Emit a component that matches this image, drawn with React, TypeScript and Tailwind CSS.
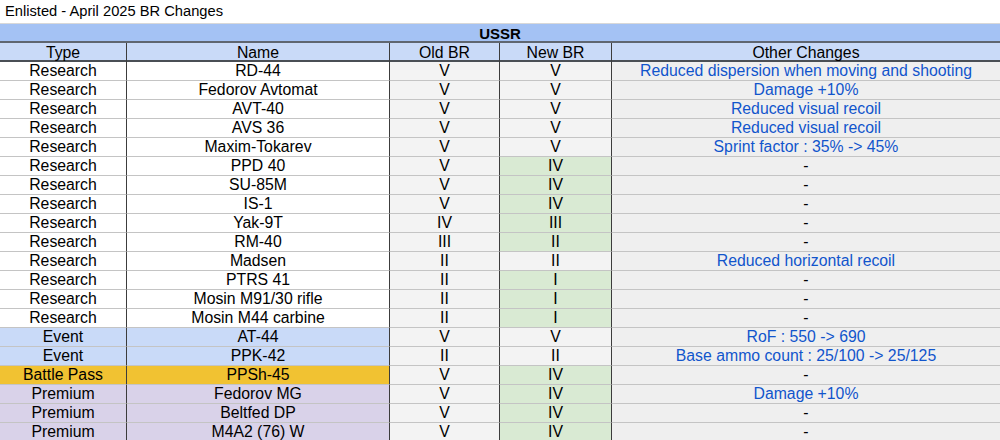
const rows = [
  { type: 'Research', name: 'RD-44', old: 'V', next: 'V', other: 'Reduced dispersion when moving and shooting' },
  { type: 'Research', name: 'Fedorov Avtomat', old: 'V', next: 'V', other: 'Damage +10%' },
  { type: 'Research', name: 'AVT-40', old: 'V', next: 'V', other: 'Reduced visual recoil' },
  { type: 'Research', name: 'AVS 36', old: 'V', next: 'V', other: 'Reduced visual recoil' },
  { type: 'Research', name: 'Maxim-Tokarev', old: 'V', next: 'V', other: 'Sprint factor : 35% -> 45%' },
  { type: 'Research', name: 'PPD 40', old: 'V', next: 'IV', other: '-' },
  { type: 'Research', name: 'SU-85M', old: 'V', next: 'IV', other: '-' },
  { type: 'Research', name: 'IS-1', old: 'V', next: 'IV', other: '-' },
  { type: 'Research', name: 'Yak-9T', old: 'IV', next: 'III', other: '-' },
  { type: 'Research', name: 'RM-40', old: 'III', next: 'II', other: '-' },
  { type: 'Research', name: 'Madsen', old: 'II', next: 'II', other: 'Reduced horizontal recoil' },
  { type: 'Research', name: 'PTRS 41', old: 'II', next: 'I', other: '-' },
  { type: 'Research', name: 'Mosin M91/30 rifle', old: 'II', next: 'I', other: '-' },
  { type: 'Research', name: 'Mosin M44 carbine', old: 'II', next: 'I', other: '-' },
  { type: 'Event', name: 'AT-44', old: 'V', next: 'V', other: 'RoF : 550 -> 690' },
  { type: 'Event', name: 'PPK-42', old: 'II', next: 'II', other: 'Base ammo count : 25/100 -> 25/125' },
  { type: 'Battle Pass', name: 'PPSh-45', old: 'V', next: 'IV', other: '-' },
  { type: 'Premium', name: 'Fedorov MG', old: 'V', next: 'IV', other: 'Damage +10%' },
  { type: 'Premium', name: 'Beltfed DP', old: 'V', next: 'IV', other: '-' },
  { type: 'Premium', name: 'M4A2 (76) W', old: 'V', next: 'IV', other: '-' },
]

const typeBg: Record<string, string> = {
  Research: 'bg-white',
  Event: 'bg-[#c9daf8]',
  'Battle Pass': 'bg-[#f1c232]',
  Premium: 'bg-[#d9d2e9]',
}

const cols = 'grid grid-cols-[127px_263px_110px_112px_388px]'

export default function App() {
  return (
    <div className="w-[1000px] h-[440px] overflow-hidden bg-white text-black font-['Liberation_Sans',Arial,sans-serif]">
      <div className="h-[23px] pl-[5px] pt-px text-[14.7px] leading-[21px]">Enlisted - April 2025 BR Changes</div>

      <div className="h-[20px] border-t border-[#d8d8d8] border-b-2 border-b-[#5f6670] bg-[#a4c2f4] pt-px text-center text-[15px] font-bold leading-[17px]">
        USSR
      </div>

      <div className={`${cols} h-[19px] border-b-2 border-[#4a4f55] bg-[#c9daf8] text-center text-[15.8px] leading-[19px]`}>
        <div className="border-r border-[#3c3c3c]">Type</div>
        <div className="border-r border-[#3c3c3c]">Name</div>
        <div className="border-r border-[#3c3c3c]">Old BR</div>
        <div className="border-r border-[#3c3c3c]">New BR</div>
        <div>Other Changes</div>
      </div>

      {rows.map((r) => (
        <div key={r.name} className={`${cols} h-[19px] text-center text-[15.8px] leading-[18px]`}>
          <div className={`border-r border-b border-[#3c3c3c] border-b-[#c4c4c4] ${typeBg[r.type]}`}>{r.type}</div>
          <div className={`border-r border-b border-[#3c3c3c] border-b-[#c4c4c4] ${typeBg[r.type]}`}>{r.name}</div>
          <div className="border-r border-b border-[#3c3c3c] border-b-[#c4c4c4] bg-[#f3f3f3]">{r.old}</div>
          <div
            className={`border-r border-b border-[#3c3c3c] border-b-[#c4c4c4] ${
              r.old !== r.next ? 'bg-[#d9ead3]' : 'bg-[#f3f3f3]'
            }`}
          >
            {r.next}
          </div>
          <div className={`border-b border-b-[#c4c4c4] bg-[#efefef] ${r.other === '-' ? '' : 'text-[#1155cc]'}`}>{r.other}</div>
        </div>
      ))}
    </div>
  )
}
